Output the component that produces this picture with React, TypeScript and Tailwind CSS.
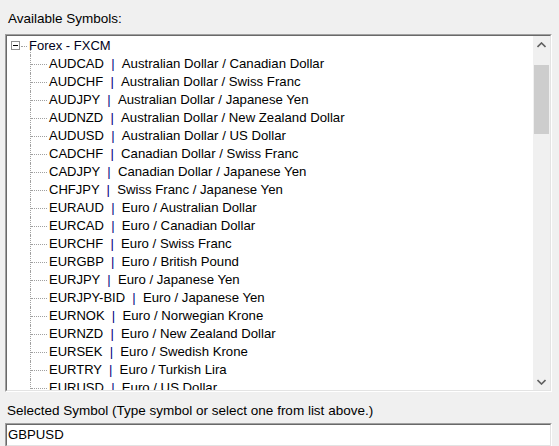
import React from 'react';

const symbols: [string, string][] = [
  ['AUDCAD', 'Australian Dollar / Canadian Dollar'],
  ['AUDCHF', 'Australian Dollar / Swiss Franc'],
  ['AUDJPY', 'Australian Dollar / Japanese Yen'],
  ['AUDNZD', 'Australian Dollar / New Zealand Dollar'],
  ['AUDUSD', 'Australian Dollar / US Dollar'],
  ['CADCHF', 'Canadian Dollar / Swiss Franc'],
  ['CADJPY', 'Canadian Dollar / Japanese Yen'],
  ['CHFJPY', 'Swiss Franc / Japanese Yen'],
  ['EURAUD', 'Euro / Australian Dollar'],
  ['EURCAD', 'Euro / Canadian Dollar'],
  ['EURCHF', 'Euro / Swiss Franc'],
  ['EURGBP', 'Euro / British Pound'],
  ['EURJPY', 'Euro / Japanese Yen'],
  ['EURJPY-BID', 'Euro / Japanese Yen'],
  ['EURNOK', 'Euro / Norwegian Krone'],
  ['EURNZD', 'Euro / New Zealand Dollar'],
  ['EURSEK', 'Euro / Swedish Krone'],
  ['EURTRY', 'Euro / Turkish Lira'],
  ['EURUSD', 'Euro / US Dollar'],
  ['GBPAUD', 'British Pound / Australian Dollar'],
];

const Row = ({ code, name, last }: { code: string; name: string; last: boolean }) => (
  <div className="relative flex h-[18px] items-center pl-[42px]">
    {/* tree connector lines */}
    <div
      className={`absolute left-[23px] top-0 w-px border-l border-dotted border-[#a0a0a0] ${last ? 'h-[9px]' : 'h-[18px]'}`}
    />
    <div className="absolute left-[24px] top-[9px] h-px w-[16px] border-t border-dotted border-[#a0a0a0]" />
    <span className="whitespace-pre">
      {code}  <span className="text-[#000080]">|</span>  <span className="text-[13.2px]">{name}</span>
    </span>
  </div>
);

export default function App() {
  return (
    <div
      className="h-[446px] w-[559px] overflow-hidden bg-[#f0f0f0] text-[13.5px] text-black"
      style={{ fontFamily: '"Liberation Sans", Arial, sans-serif' }}
    >
      <div className="px-[8px] pt-[11px] leading-[16px]">Available Symbols:</div>

      {/* tree view */}
      <div className="ml-[5px] mt-[7px] h-[358px] w-[547px] border border-b-white border-l-[#a0a0a0] border-r-white border-t-[#a0a0a0]">
        <div className="flex h-full border border-b-[#e3e3e3] border-l-[#696969] border-r-[#e3e3e3] border-t-[#696969] bg-white text-[13px]">
          <div className="relative flex-1 overflow-hidden pt-[1px]">
            <div className="relative flex h-[18px] items-center pl-[22px]">
              <div className="absolute left-[4px] top-[4px] flex h-[9px] w-[9px] items-center justify-center border border-[#919191] bg-white">
                <div className="h-px w-[5px] bg-black" />
              </div>
              <div className="absolute left-[14px] top-[9px] h-px w-[6px] border-t border-dotted border-[#a0a0a0]" />
              <div className="absolute left-[23px] top-[13px] h-[5px] w-px border-l border-dotted border-[#a0a0a0]" />
              <span className="text-[#000020]">Forex - FXCM</span>
            </div>
            {symbols.map(([code, name], i) => (
              <Row key={code} code={code} name={name} last={i === symbols.length - 1} />
            ))}
          </div>

          {/* scrollbar */}
          <div className="flex w-[17px] flex-col bg-[#f0f0f0]">
            <div className="flex h-[17px] items-center justify-center">
              <svg width="9" height="6" viewBox="0 0 9 6">
                <path d="M0.5 5 L4.5 1 L8.5 5" stroke="#606060" strokeWidth="1.6" fill="none" />
              </svg>
            </div>
            <div className="mx-[1px] mt-[12px] h-[69px] bg-[#cdcdcd]" />
            <div className="flex-1" />
            <div className="flex h-[17px] items-center justify-center">
              <svg width="9" height="6" viewBox="0 0 9 6">
                <path d="M0.5 1 L4.5 5 L8.5 1" stroke="#606060" strokeWidth="1.6" fill="none" />
              </svg>
            </div>
          </div>
        </div>
      </div>

      <div className="px-[7px] pt-[11px] leading-[16px]">
        Selected Symbol (Type symbol or select one from list above.)
      </div>

      <div className="ml-[5px] mt-[4px] h-[24px] w-[547px] border border-b-white border-l-[#a0a0a0] border-r-white border-t-[#a0a0a0]">
        <div className="flex h-full items-center border border-b-[#e3e3e3] border-l-[#696969] border-r-[#e3e3e3] border-t-[#696969] bg-white pl-[1px] text-[13.2px]">
          GBPUSD
        </div>
      </div>
    </div>
  );
}
